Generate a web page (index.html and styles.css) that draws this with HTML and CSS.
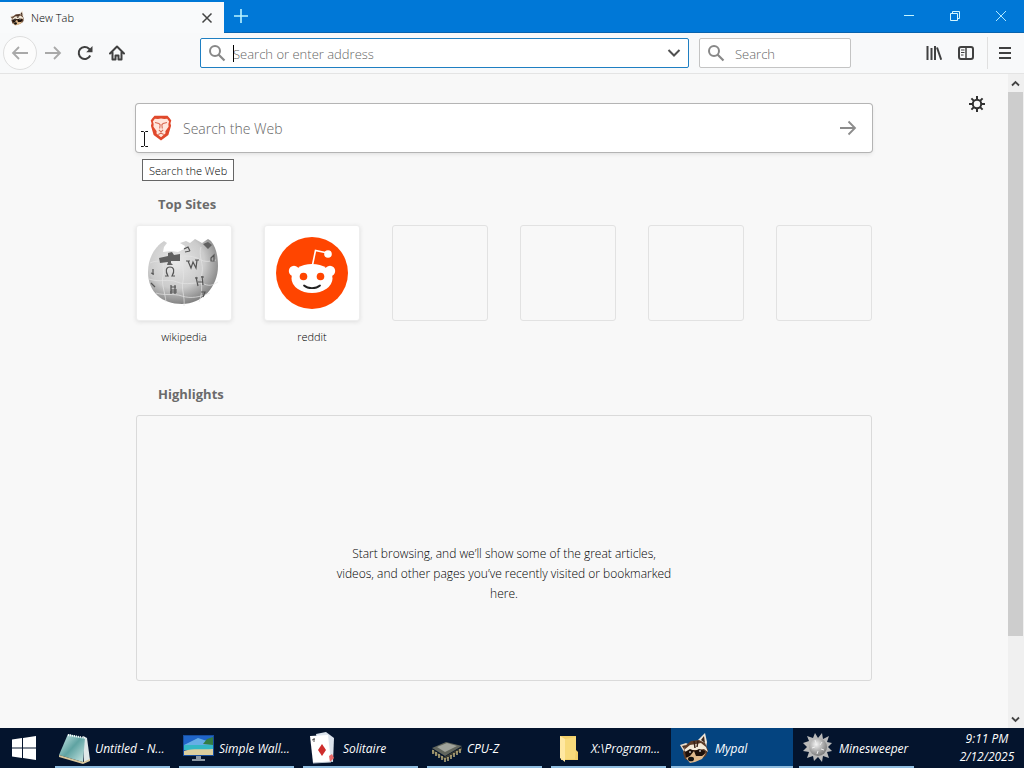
FILE: index.html
```html
<!DOCTYPE html>
<html lang="en">
<head>
    <meta charset="UTF-8">
    <title>New Tab</title>
    <link rel="stylesheet" href="styles.css">
</head>
<body>
<!-- title bar -->
<header class="titlebar">
    <div class="tab">
        <svg class="favicon" viewBox="0 0 32 32"><use href="#raccoon"/></svg>
        <span class="tab-title">New Tab</span>
        <button class="tab-close" aria-label="Close tab">
            <svg width="12" height="12" viewBox="0 0 12 12"><path d="M1.500 1.500l9 9M10.500 1.500l-9 9" stroke="#444" stroke-width="1.5"/></svg>
        </button>
    </div>
    <button class="new-tab" aria-label="Open a new tab">
        <svg width="16" height="16" viewBox="0 0 16 16"><path d="M8 1v14M1 8h14" stroke="#b9f3ff" stroke-width="1.6"/></svg>
    </button>
    <div class="window-btns">
        <button aria-label="Minimize"><svg width="12" height="12" viewBox="0 0 12 12"><path d="M1 5.5h10" stroke="#c4f4ff"/></svg></button>
        <button aria-label="Restore"><svg width="12" height="12" viewBox="0 0 12 12"><path d="M1.500 3.500h7v7h-7zM3.500 3.500v-2h7v7h-2" fill="none" stroke="#d4f7ff"/></svg></button>
        <button aria-label="Close"><svg width="12" height="12" viewBox="0 0 12 12"><path d="M1 1l10 10M11 1L1 11" stroke="#b0e8ff"/></svg></button>
    </div>
</header>

<!-- toolbar -->
<nav class="toolbar">
    <button class="back" aria-label="Back">
        <svg width="18" height="16" viewBox="0 0 18 16"><path d="M17 8H2M8 2L2 8l6 6" fill="none" stroke="#a9a9a9" stroke-width="1.8"/></svg>
    </button>
    <button class="tool" aria-label="Forward">
        <svg width="18" height="16" viewBox="0 0 18 16"><path d="M1 8h15M10 2l6 6-6 6" fill="none" stroke="#a9a9a9" stroke-width="1.8"/></svg>
    </button>
    <button class="tool" aria-label="Reload">
        <svg width="16" height="16" viewBox="0 0 16 16"><path d="M13.200 10.500A6 6 0 1 1 12 3.700L13.500 5.500" fill="none" stroke="#404040" stroke-width="2"/><path d="M15.500 1v6.300H9.200z" fill="#404040"/></svg>
    </button>
    <button class="tool" aria-label="Home">
        <svg width="16" height="16" viewBox="0 0 16 16"><path d="M1 8.500L8 1.500l7 7M3.500 7.500v7h3v-4h3v4h3v-7" fill="none" stroke="#404040" stroke-width="2" stroke-linejoin="round" stroke-linecap="round"/></svg>
    </button>
    <div class="urlbar">
        <svg class="glass" viewBox="0 0 18 18"><use href="#glass"/></svg>
        <input type="text" placeholder="Search or enter address" aria-label="Search or enter address">
        <span class="caret"></span>
        <button class="dropmarker" aria-label="Show history">
            <svg width="14" height="10" viewBox="0 0 14 10"><path d="M1.500 2L7 7.500 12.500 2" fill="none" stroke="#505050" stroke-width="2"/></svg>
        </button>
    </div>
    <div class="searchbar">
        <svg class="glass" viewBox="0 0 18 18"><use href="#glass"/></svg>
        <input type="text" placeholder="Search" aria-label="Search">
    </div>
    <div class="tools-right">
        <button class="tool" aria-label="Library">
            <svg width="16" height="16" viewBox="0 0 16 16"><path d="M1.500 1v14M5.500 3v12M9 1v14" stroke="#404040" stroke-width="2"/><path d="M11 2.500l4.200 12.200" stroke="#404040" stroke-width="2"/></svg>
        </button>
        <button class="tool" aria-label="Sidebars">
            <svg width="16" height="16" viewBox="0 0 16 16"><rect x="1" y="2" width="14" height="12" rx="2" fill="none" stroke="#404040" stroke-width="2"/><path d="M8 2v12" stroke="#404040" stroke-width="1.500"/><path d="M3 5h3.500M3 7.500h3.500M3 10h2.500" stroke="#404040"/></svg>
        </button>
        <button class="tool menu" aria-label="Menu">
            <svg width="14" height="14" viewBox="0 0 14 14"><path d="M1 2h12M1 7h12M1 12h12" stroke="#404040" stroke-width="2"/></svg>
        </button>
    </div>
</nav>

<!-- new tab page -->
<div class="browser">
    <main class="page">
        <button class="prefs" aria-label="Customize your New Tab page">
            <svg width="16" height="16" viewBox="0 0 16 16"><path d="M8 0v16M0 8h16M2.400 2.400l11.200 11.200M13.600 2.400L2.400 13.600" stroke="#303030" stroke-width="2"/><circle cx="8" cy="8" r="4.200" fill="#f8f8f8" stroke="#303030" stroke-width="2"/></svg>
        </button>
        <div class="content">
            <form class="web-search">
                <svg class="brave" viewBox="0 0 20 24"><path d="M4 .8h12l2 2.200 1.500 2-.8 2.500.6 2.500-2.500 8.500L10 23.500l-6.800-5L.7 10l.6-2.500L.5 5 2 3z" fill="#e0492c"/><path d="M10 3.200l3 .5 2.700-.3 1.800 2.700-.7 2.200.2 2.600-3 4 .2 2L10 20.500 5.800 17l.2-2.100-3-4 .2-2.600-.7-2.200 1.800-2.700 2.700.3z" fill="#ffe6dc"/><path d="M4.500 7l3.500.8L9.200 9 8.800 12.500M15.500 7l-3.500.8L10.800 9l.4 3.500M8 13.800l2 1.700 2-1.700M10 15.500v2M7.500 18l2.500-1.300 2.500 1.300" fill="none" stroke="#d76750" stroke-width="1"/></svg>
                <input type="search" placeholder="Search the Web" aria-label="Search the Web">
                <button class="go" type="button" aria-label="Submit search">
                    <svg width="18" height="16" viewBox="0 0 18 16"><path d="M1 8h15M9.500 1.500L16 8l-6.500 6.500" fill="none" stroke="#8c8c8c" stroke-width="1.800"/></svg>
                </button>
                <span class="tooltip">Search the Web</span>
                <svg class="pointer" viewBox="0 0 9 18"><path d="M1 1.500h2.500l1 1 1-1H8M1 16.500h2.500l1-1 1 1H8M4.500 2v14" fill="none" stroke="#111"/></svg>
            </form>

            <section class="top-sites">
                <h2>Top Sites</h2>
                <ul>
                    <li>
                        <a href="#">
                            <span class="tile filled">
                                <svg width="76" height="76" viewBox="0 0 76 76">
                                    <defs><radialGradient id="globe" cx=".4" cy=".35" r=".68"><stop offset="0" stop-color="#e9e9e9"/><stop offset=".6" stop-color="#cbcbcb"/><stop offset="1" stop-color="#7b7b7b"/></radialGradient></defs>
                                    <path d="M18 6l3 2-3 4-1 5 8-1 7 1 6-3 1-3-5-3 6-2 4 2 5-4 7 4 6-4 3 2c5 6 7 15 7 25 0 21-16 38-36 38S2 57 2 37C2 24 8 12 18 6z" fill="url(#globe)"/>
                                    <path d="M4 28c8-4 16 0 23-4s19-4 26 0 11 2 17 1M3 44c12 4 19-1 28 3s20-1 27 2 10 0 14-2M10 58c9 3 17 0 26 3s18 1 28-3M19 25c-4 6 0 9-2 16s2 16 3 26M37 22c-2 8 2 16 0 24s2 15 1 25M55 12c-3 9 3 17 1 26s2 17-3 29" fill="none" stroke="#e4e4e4" stroke-width=".7"/>
                                    <path d="M13 23l9-2v-3l4-1 2 3 6-1v7h-9v2l2 2h-6l1-3-8 1zM57 9l5-2 4 3-4 4z" fill="#606060"/>
                                    <g fill="none" stroke="#555" stroke-width="1.200"><path d="M19 41h3c-3-5-2-9 2-9s5 4 2 9h3"/><path d="M42 26l3 7 2-6 3 6 1-8M40 26h4m5-1h4"/><path d="M50 42l2 9m0-4h5m-1-6l1 9M49 43h3m3-1h3"/><path d="M25 50v9m0-7h5m-5 3h6m-2-5v9m-5-2h7"/><path d="M38 14l4-2 2 4m-5 1l5-1"/><path d="M65 23l3-3v6h-3z"/><path d="M7 34v6M5 38l3 1M5 48l4 4M55 57h4l-2 5"/></g>
                                </svg>
                            </span>
                            <span class="title">wikipedia</span>
                        </a>
                    </li>
                    <li>
                        <a href="#">
                            <span class="tile filled">
                                <svg width="76" height="76" viewBox="0 0 76 76"><circle cx="38" cy="38" r="36" fill="#ff4500"/><path d="M38.500 30l3-14.500 12 2.500" fill="none" stroke="#fff" stroke-width="1.600"/><circle cx="54" cy="19" r="3.800" fill="#fff"/><circle cx="20" cy="36" r="5.200" fill="#fff"/><circle cx="56" cy="36" r="5.200" fill="#fff"/><ellipse cx="38" cy="43.500" rx="20.500" ry="14.500" fill="#fff"/><circle cx="29.500" cy="41.500" r="3.800" fill="#ff4500"/><circle cx="46.500" cy="41.500" r="3.800" fill="#ff4500"/><path d="M30 50.500c4 3.500 12 3.500 16 0" fill="none" stroke="#222" stroke-width="1.800" stroke-linecap="round"/></svg>
                            </span>
                            <span class="title">reddit</span>
                        </a>
                    </li>
                    <li><span class="tile"></span></li>
                    <li><span class="tile"></span></li>
                    <li><span class="tile"></span></li>
                    <li><span class="tile"></span></li>
                </ul>
            </section>

            <section class="highlights">
                <h2>Highlights</h2>
                <div class="empty">
                    <p>Start browsing, and we’ll show some of the great articles, videos, and other pages you’ve recently visited or bookmarked here.</p>
                </div>
            </section>
        </div>
    </main>
    <div class="scrollbar">
        <svg width="15" height="18" viewBox="0 0 15 18"><path d="M4 11.500L7.500 8l3.500 3.500" fill="none" stroke="#444" stroke-width="1.800"/></svg>
        <div class="track"><div class="thumb"></div></div>
        <svg width="15" height="18" viewBox="0 0 15 18"><path d="M4 7.500L7.500 11 11 7.500" fill="none" stroke="#444" stroke-width="1.800"/></svg>
    </div>
</div>

<!-- taskbar -->
<footer class="taskbar">
    <button class="start" aria-label="Start">
        <svg width="24" height="24" viewBox="0 0 24 24"><path d="M0 3.500l10-1.400v9.400H0zM11 2l13-2v11.500H11zM0 12.500h10v9.400L0 20.500zM11 12.500h13V24l-13-2z" fill="#fff"/></svg>
    </button>
    <div class="tasks">
        <button class="task">
            <svg viewBox="0 0 32 32"><defs><linearGradient id="note" x1="0" y1="0" x2="1" y2="1"><stop offset="0" stop-color="#d4eeee"/><stop offset=".5" stop-color="#5fa3a2"/><stop offset="1" stop-color="#cdeae7"/></linearGradient></defs><path d="M24 4l4 2 3 22-6 3z" fill="#dfe8e8"/><path d="M9 2l17 4-2 24L0 23z" fill="url(#note)"/><path d="M0 23l24 7 7-3v2l-7 3L0 25z" fill="#d8c79c"/><path d="M9 3l17 3" stroke="#fff" stroke-width="2" stroke-dasharray="1 1"/></svg>
            <span>Untitled - N...</span>
        </button>
        <button class="task">
            <svg viewBox="0 0 32 32"><path d="M0 3h31v21H0z" fill="#164d9d"/><path d="M1 4h29v9H1z" fill="#2065c8"/><path d="M3 12l12-6 9 3 6 1v3H1z" fill="#66aee5"/><path d="M1 13h29v5H1z" fill="#33b7c4"/><path d="M1 19c10-3 18-1 29-2v6H1z" fill="#dccf9f"/><path d="M20 12l4-5 6-2v8z" fill="#347c42"/><path d="M13 24h5v3h4v2H9v-2h4z" fill="#8c98a4"/></svg>
            <span>Simple Wall...</span>
        </button>
        <button class="task">
            <svg viewBox="0 0 32 32"><path d="M9 2l10-2 8 6-1 24-12-2z" fill="#dce4ed"/><path d="M3 4l18-1 3 27-18 1z" fill="#fff"/><path d="M15 12l4 6-4 6-4-6z" fill="#ce2d2c"/><path d="M7 6v4M5 8l3-1" stroke="#555"/><path d="M22 24l3-2 2 4-4 4z" fill="#e66868"/><path d="M6 31l18-1" stroke="#b9c3ce"/></svg>
            <span>Solitaire</span>
        </button>
        <button class="task">
            <svg viewBox="0 0 32 32"><path d="M1 17l12 8 18-10v3L14 28 1 20z" fill="#3a3b33"/><path d="M1 16l14-6 16 4-17 10z" fill="#62665d"/><path d="M6 15l10-4 10 3-12 6z" fill="#a0a39b"/><path d="M2 18v4m3-2v4m3-2v4m3-2v4m3-2v4m3-5v4m3-6v4m3-6v4m3-6v4m3-6v4" stroke="#d6c68d" stroke-width="1.300"/></svg>
            <span>CPU-Z</span>
        </button>
        <button class="task">
            <svg viewBox="0 0 32 32"><path d="M5 4h16v14l2 2v8H6z" fill="#f1cf69"/><path d="M5 4l5 3v23l-5-4z" fill="#ffe8a2"/><path d="M10 7l11-2v12l-1 10H10z" fill="#f8da7b"/></svg>
            <span>X:\Program...</span>
        </button>
        <button class="task active">
            <svg viewBox="0 0 32 32">
                <g id="raccoon"><path d="M1 13l6-2 4 2-6 7z" fill="#e9dccb"/><path d="M3 14l4-1-2 4z" fill="#4d3225"/><path d="M19 8l7-7 2 9-1 6z" fill="#f0e6d8"/><path d="M22 8l3-4 1 7z" fill="#3b261b"/><path d="M6 14l6-5 8-1 6 3 3 7-2 6-7 4-8 2-6-3-2-6z" fill="#5b3b28"/><path d="M5 18l6-5 6-1 5-1 5 4 2 5-4-3-6 1-6 0-5 3z" fill="#f4ead9"/><path d="M6 20l5-3 5 2 4-2 6 2-1 5-6 2-4-1-5 2-3-2z" fill="#1c100b"/><path d="M7 26l4-2 4-5 2 5 6 0 4-3-4 6-7 3-5 1z" fill="#dfb98c"/><ellipse cx="12" cy="27" rx="3" ry="2.300" fill="#111"/><path d="M10 20h2M20 19h2" stroke="#fff"/><path d="M15 9l1 7M19 9l-1 6" stroke="#3a2318" stroke-width="1.500"/></g>
            </svg>
            <span>Mypal</span>
        </button>
        <button class="task">
            <svg viewBox="0 0 32 32"><defs><radialGradient id="mine" cx=".4" cy=".35" r=".7"><stop offset="0" stop-color="#f4f4f4"/><stop offset="1" stop-color="#737373"/></radialGradient></defs><path d="M12 1l3 5 4-5 1 6 6-3-2 6 5 1-4 4 4 4-5 1 2 6-6-2-1 6-4-5-4 4-1-5-6 2 2-6-6-1 4-4-4-4 6-2-2-5 6 2z" fill="#b9b9b9"/><circle cx="15" cy="15" r="9" fill="url(#mine)"/><path d="M12 8l1 3M19 10l-2 3M9 16l3-1M14 22l1-3M21 18l-3-1" stroke="#eee"/></svg>
            <span>Minesweeper</span>
        </button>
    </div>
    <div class="clock">
        <time>9:11 PM</time>
        <time>2/12/2025</time>
    </div>
</footer>

<svg class="sprite">
    <symbol id="glass" viewBox="0 0 18 18"><circle cx="7" cy="7" r="5" fill="none" stroke="#888" stroke-width="2"/><path d="M10.500 10.500L16.500 16.500" stroke="#888" stroke-width="2.200"/></symbol>
</svg>
</body>
</html>
```
FILE: styles.css
```css
* {
    box-sizing: border-box;
    margin: 0;
    padding: 0;
}

body {
    display: flex;
    flex-direction: column;
    height: 100vh;
    overflow: hidden;
    background: #f8f8f8;
    color: #000;
    font-family: "Open Sans", "Noto Sans", sans-serif;
    font-size: 11px;
    font-weight: 300;
}

button, input {
    border: 0;
    outline: 0;
    background: none;
    color: inherit;
    font: inherit;
}

button {
    display: flex;
    align-items: center;
    justify-content: center;
}

svg {
    flex: none;
}

ul {
    list-style: none;
}

.sprite {
    position: absolute;
    width: 0;
    height: 0;
}

/* title bar */
.titlebar {
    display: flex;
    height: 33px;
    padding-top: 2px;
    background: #0078d7;
    border-bottom: 1px solid #0863ae;
}

.tab {
    display: flex;
    align-items: center;
    width: 224px;
    height: 31px;
    padding: 0 9px;
    background: #f9fafb;
}

.favicon {
    width: 17px;
    height: 16px;
}

.tab-title {
    flex: 1;
    padding-left: 5px;
}

.tab-close {
    width: 16px;
    height: 16px;
}

.new-tab {
    width: 34px;
    height: 28px;
}

.window-btns {
    display: flex;
    margin-left: auto;
}

.window-btns button {
    width: 46px;
    height: 28px;
}

/* toolbar */
.toolbar {
    display: flex;
    align-items: center;
    height: 41px;
    padding: 0 3px;
    background: #f8f9fa;
    border-bottom: 1px solid #e4e4e4;
}

.back {
    width: 34px;
    height: 34px;
    border: 1px solid #dedede;
    border-radius: 50%;
    background: #fcfcfc;
}

.tool {
    width: 32px;
    height: 32px;
}

.urlbar, .searchbar {
    position: relative;
    display: flex;
    align-items: center;
    height: 30px;
    background: #fff;
    border: 1px solid #c4c4c4;
    border-radius: 2px;
}

.urlbar {
    flex: 1;
    margin: 0 10px 0 67px;
    border-color: #1f7fc2;
}

.searchbar {
    width: 152px;
}

.glass {
    width: 18px;
    height: 18px;
    margin-left: 7px;
}

.urlbar input, .searchbar input {
    flex: 1;
    min-width: 0;
    height: 28px;
    padding: 2px 0 0 7px;
    font-size: 13px;
}

.searchbar input {
    padding-left: 10px;
}

input::placeholder {
    color: #666;
    opacity: 1;
}

.caret {
    position: absolute;
    left: 32px;
    top: 6px;
    width: 1px;
    height: 17px;
    background: #000;
}

.dropmarker {
    width: 28px;
    height: 28px;
}

.tools-right {
    display: flex;
    margin-left: 67px;
}

.tools-right .menu {
    width: 34px;
    margin-left: 5px;
    border-left: 1px solid #e0e0e0;
}

/* new tab page */
.browser {
    display: flex;
    flex: 1;
    min-height: 0;
}

.page {
    position: relative;
    flex: 1;
    overflow: hidden;
    padding-top: 30px;
}

.prefs {
    position: absolute;
    top: 22px;
    right: 23px;
    width: 16px;
    height: 16px;
}

.content {
    max-width: 736px;
    margin: 0 auto;
}

.web-search {
    position: relative;
    display: flex;
    align-items: center;
    height: 48px;
    background: #fff;
    border-radius: 3px;
    box-shadow: 0 0 0 1px #b4b4b4, 0 2px 4px #ddd;
}

.brave {
    width: 22px;
    height: 26px;
    margin-left: 14px;
}

.web-search input {
    flex: 1;
    height: 48px;
    padding-left: 11px;
    font-size: 14px;
}

.go {
    width: 48px;
    height: 48px;
}

.tooltip {
    position: absolute;
    left: 6px;
    top: 55px;
    padding: 1px 6px 0;
    line-height: 19px;
    white-space: nowrap;
    background: #fff;
    border: 1px solid #666;
}

.pointer {
    position: absolute;
    left: 4px;
    top: 26px;
    width: 9px;
    height: 18px;
}

h2 {
    padding-left: 22px;
    color: #6b6b6b;
    font-size: 13px;
    font-weight: 700;
    line-height: 20px;
}

.top-sites {
    margin-top: 42px;
}

.top-sites ul {
    display: flex;
    justify-content: space-between;
    margin-top: 11px;
}

.top-sites li {
    width: 96px;
    height: 128px;
    text-align: center;
}

.top-sites a {
    color: #000;
    text-decoration: none;
}

.tile {
    display: flex;
    align-items: center;
    justify-content: center;
    height: 96px;
    border: 1px solid #e2e2e2;
    border-radius: 3px;
}

.filled {
    background: #fff;
    border-color: #eee;
    box-shadow: 0 1px 4px #ddd;
}

.title {
    display: block;
    line-height: 32px;
}

.highlights {
    margin-top: 31px;
}

.empty {
    display: flex;
    align-items: center;
    justify-content: center;
    height: 266px;
    margin-top: 11px;
    padding-top: 52px;
    border: 1px solid #dadada;
    border-radius: 3px;
}

.empty p {
    width: 340px;
    font-size: 12px;
    line-height: 20px;
    text-align: center;
}

.scrollbar {
    display: flex;
    flex-direction: column;
    width: 16px;
    background: #f0f0f0;
}

.track {
    flex: 1;
}

.thumb {
    width: 15px;
    height: 88%;
    background: #cdcdcd;
}

/* taskbar */
.taskbar {
    display: flex;
    height: 40px;
    background: #04142d;
    color: #fff;
    font-size: 12px;
    font-style: italic;
    font-weight: 400;
}

.start {
    width: 48px;
}

.tasks {
    display: flex;
    flex: 1;
    gap: 2px;
    margin-left: 3px;
}

.task {
    position: relative;
    justify-content: flex-start;
    gap: 4px;
    width: 122px;
    padding-left: 8px;
    white-space: nowrap;
}

.task svg {
    width: 32px;
    height: 32px;
}

.task::after {
    content: "";
    position: absolute;
    left: 4px;
    right: 3px;
    bottom: 0;
    height: 2px;
    background: #8fbde0;
}

.active {
    background: #044480;
}

.active::after {
    left: 0;
    right: 0;
}

.clock {
    display: flex;
    flex-direction: column;
    align-items: center;
    width: 64px;
    margin-right: 5px;
    padding-top: 2px;
    line-height: 18px;
}
```
